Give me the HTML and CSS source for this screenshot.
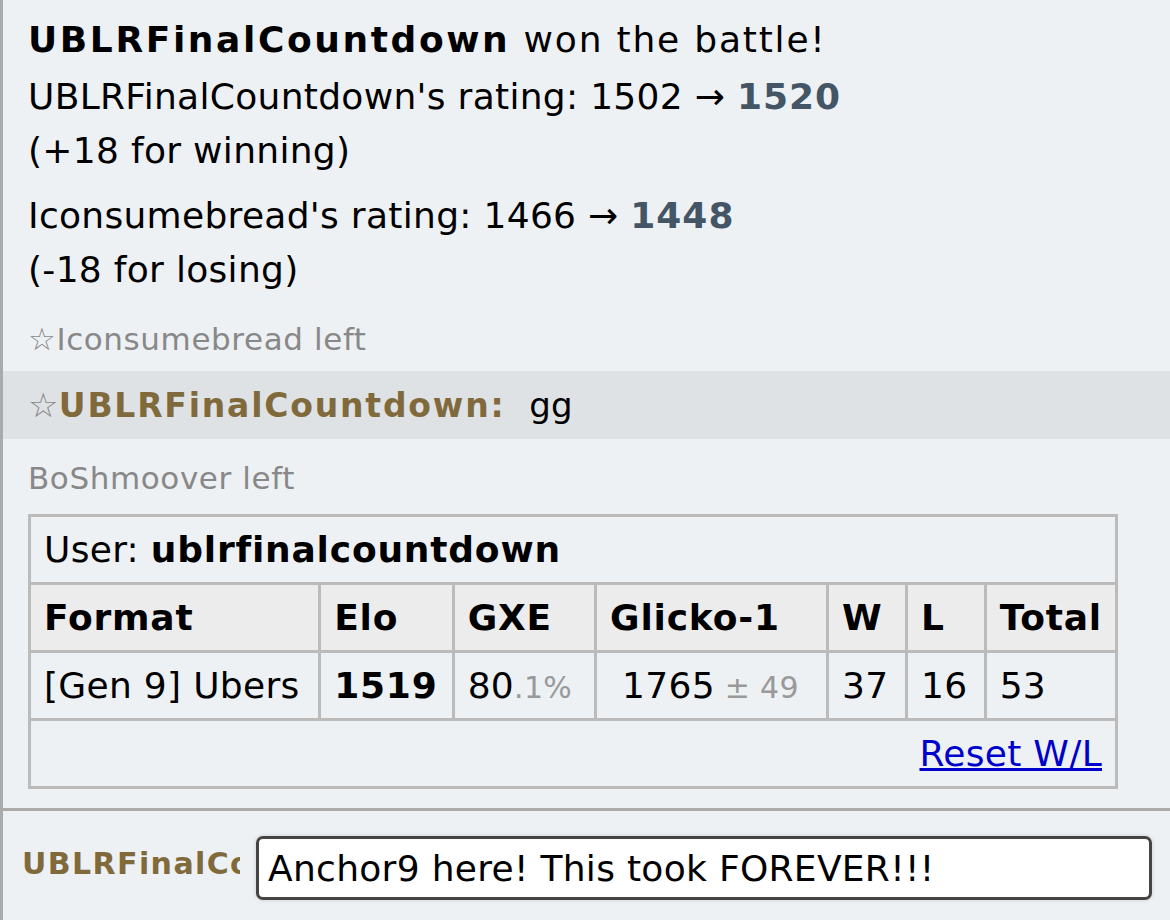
FILE: index.html
```html
<!DOCTYPE html>
<html lang="en">
  <head>
    <meta charset="UTF-8" />
    <title>Battle Log</title>
    <link rel="stylesheet" href="styles.css">
  </head>
  <body>
    <div class="battle-log">
      <div class="battle-history win">
        <strong>UBLRFinalCountdown</strong><span class="win-text"> won the battle!</span>
      </div>
      <div class="battle-history rating">
        UBLRFinalCountdown's rating: 1502 &rarr; <strong>1520</strong><br />(+18 for winning)
      </div>
      <div class="battle-history rating">
        Iconsumebread's rating: 1466 &rarr; <strong>1448</strong><br />(-18 for losing)
      </div>
      <div class="notice first"><small>&#9734;Iconsumebread left</small></div>
      <div class="chat mine">
        <small class="rank">&#9734;</small><strong>UBLRFinalCountdown:</strong> <em>gg</em>
      </div>
      <div class="notice second"><small>BoShmoover left</small></div>
      <div class="ladder-wrap">
        <table class="ladder">
          <tr>
            <td colspan="7">User: <strong>ublrfinalcountdown</strong></td>
          </tr>
          <tr>
            <th class="col-format">Format</th>
            <th class="col-elo">Elo</th>
            <th class="col-gxe">GXE</th>
            <th class="col-glicko">Glicko-1</th>
            <th class="col-w">W</th>
            <th class="col-l">L</th>
            <th class="col-total">Total</th>
          </tr>
          <tr>
            <td>[Gen 9] Ubers</td>
            <td><strong>1519</strong></td>
            <td>80<small>.1%</small></td>
            <td class="glicko">1765<small> &plusmn; 49</small></td>
            <td>37</td>
            <td>16</td>
            <td>53</td>
          </tr>
          <tr>
            <td colspan="7" class="reset"><a href="#">Reset W/L</a></td>
          </tr>
        </table>
      </div>
    </div>
    <div class="battle-controls">
      <form class="chatbox">
        <label class="chat-name">UBLRFinalCountdown</label>
        <input type="text" class="textbox" value="Anchor9 here! This took FOREVER!!!" />
      </form>
    </div>
  </body>
</html>
```

FILE: styles.css
```css
html,
body {
  height: 100%;
}

body {
  margin: 0;
  padding: 0;
  font-family: "DejaVu Sans", Verdana, sans-serif;
  font-size: 36px;
  letter-spacing: 0.3px;
  color: #000;
  background-color: #edf1f4;
  border-left: 3px solid #aaa;
  box-sizing: border-box;
}

.battle-log {
  padding: 13px 0 0 25px;
}

.battle-history {
  line-height: 54px;
}

.win {
  margin-bottom: 3px;
}

.win strong {
  letter-spacing: 2.6px;
}

.win-text {
  letter-spacing: 1.8px;
}

.rating {
  margin-bottom: 11px;
}

.rating strong {
  color: #445566;
  letter-spacing: 1px;
}

.notice {
  line-height: 60px;
}

.notice small {
  font-size: 31px;
  letter-spacing: 0.6px;
  color: #888;
}

.notice.second {
  margin-top: 6px;
  line-height: 64px;
}

.chat {
  margin: 2px 0 0 -25px;
  padding-left: 25px;
  background-color: #dfe2e4;
  height: 68px;
  line-height: 68px;
}

.chat .rank {
  font-size: 34px;
  color: #888;
}

.chat strong {
  font-size: 33px;
  letter-spacing: 1.8px;
  color: #806a3c;
  margin-right: 12px;
}

.chat em {
  font-style: normal;
  font-size: 34px;
}

.ladder-wrap {
  padding-top: 4px;
}

.ladder {
  border-collapse: collapse;
  border: 3px solid #bbb;
  width: 1090px;
}

.ladder td,
.ladder th {
  border: 3px solid #bbb;
  height: 65px;
  padding: 0 13px;
  text-align: left;
  white-space: nowrap;
}

.ladder th {
  background-color: #ececec;
}

.ladder strong,
.ladder th {
  letter-spacing: 0.8px;
}

.ladder small {
  font-size: 30px;
  color: #999;
}

.col-format { width: 264px; }
.col-elo { width: 105px; }
.col-gxe { width: 118px; }
.col-glicko { width: 210px; }
.col-w { width: 52px; }
.col-l { width: 51px; }

.glicko {
  padding-left: 25px !important;
}

.reset {
  text-align: right !important;
}

.reset a {
  color: #0000cc;
}

.battle-controls {
  border-top: 3px solid #aaa;
  margin-top: 19px;
  padding: 25px 18px 0 19px;
}

.chatbox {
  display: flex;
  align-items: center;
  gap: 16px;
}

.chat-name {
  width: 218px;
  overflow: hidden;
  white-space: nowrap;
  font-weight: bold;
  font-size: 30px;
  letter-spacing: 1.4px;
  color: #806a3c;
  margin-bottom: 10px;
}

.textbox {
  flex: 1;
  height: 64px;
  box-sizing: border-box;
  border: 3px solid #444;
  border-radius: 7px;
  background: #fff;
  font-family: "DejaVu Sans", Verdana, sans-serif;
  font-size: 36px;
  letter-spacing: 0.3px;
  padding: 0 9px;
  color: #000;
  box-shadow: 0 0 4px rgba(0, 0, 0, 0.15);
}
```
